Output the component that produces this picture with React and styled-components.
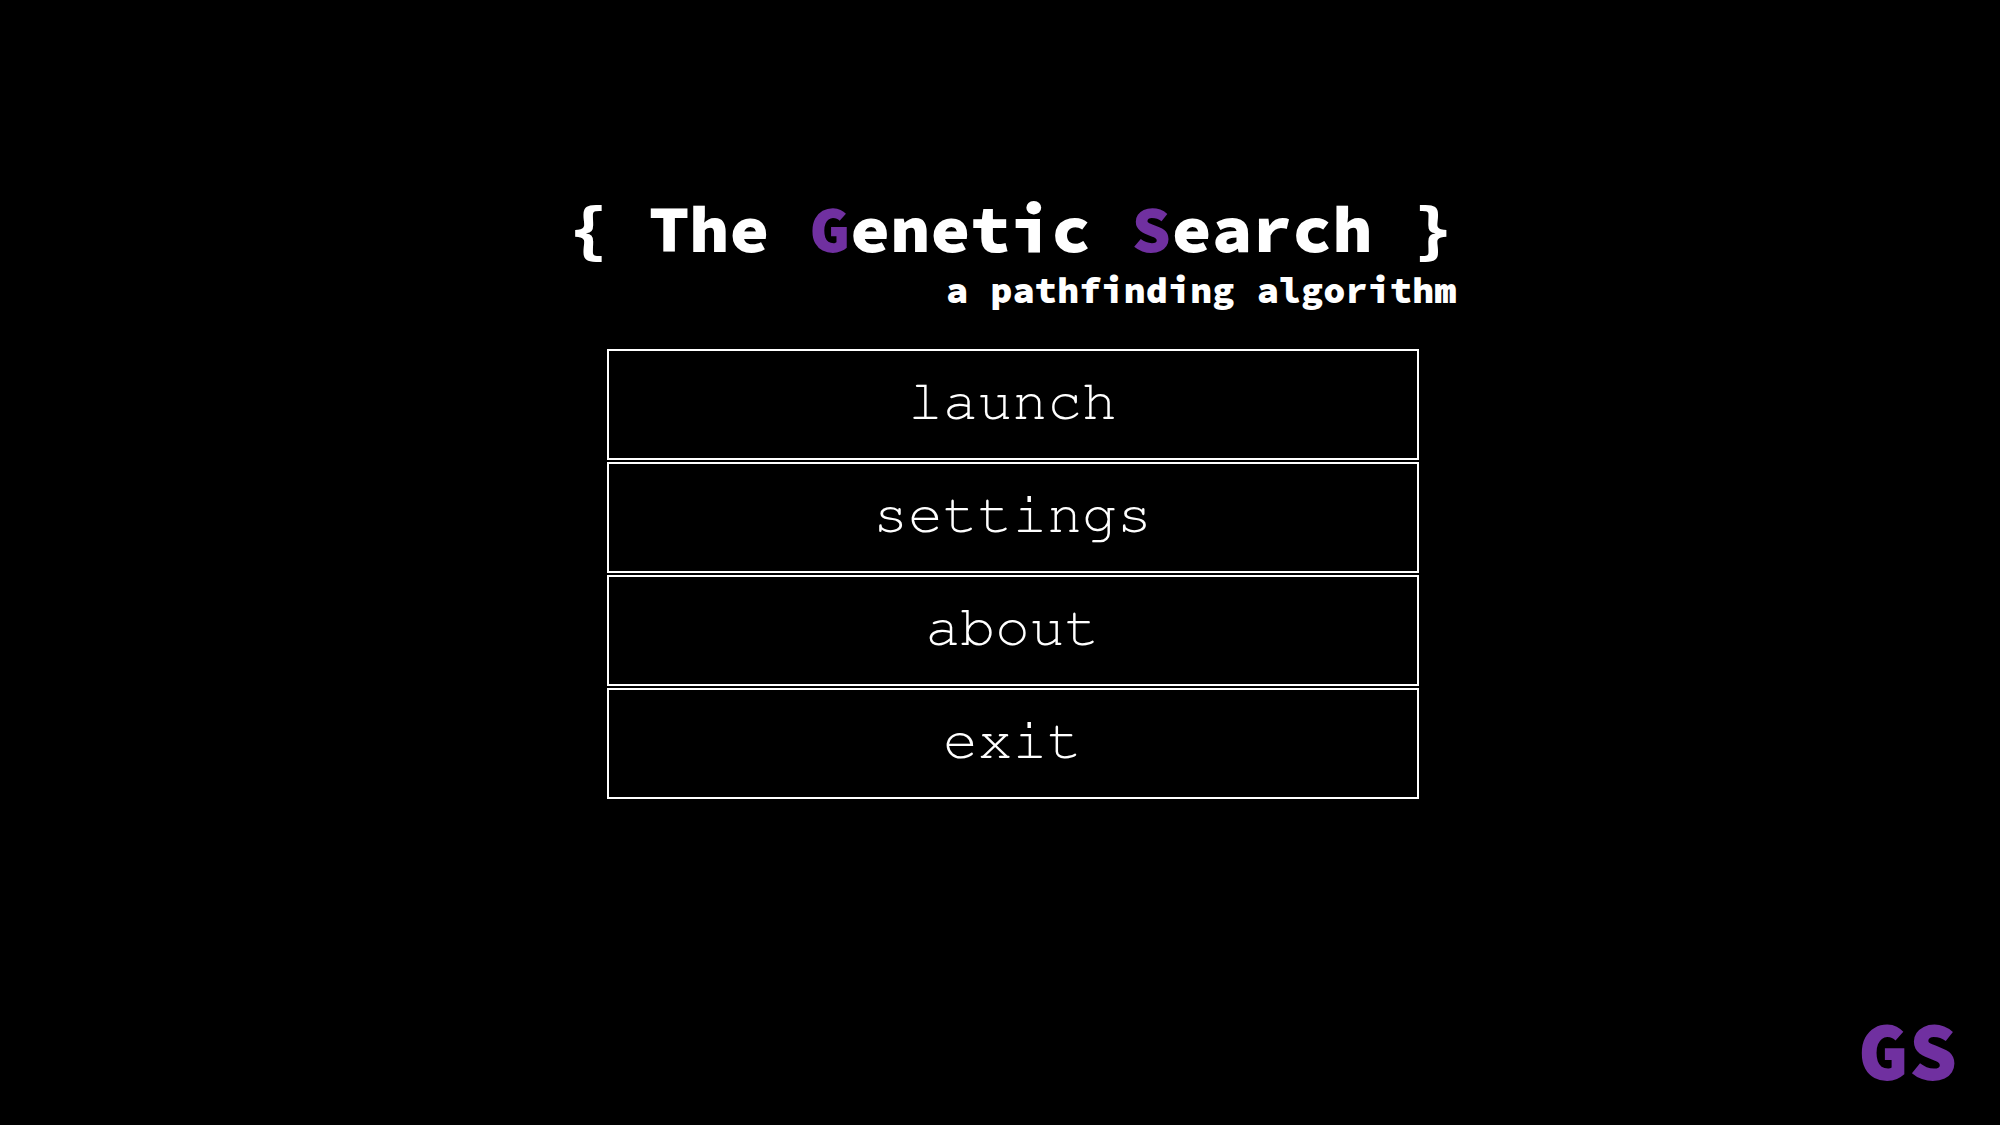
import React from "react";
import styled, { createGlobalStyle } from "styled-components";

const GlobalStyle = createGlobalStyle`
  *, *::before, *::after { box-sizing: border-box; }
  body { margin: 0; background: #000; color: #fff; }
`;

const displayFont = `"Source Code Pro", "Noto Sans Mono CJK SC", "DejaVu Sans Mono", monospace`;
const menuFont = `"FreeMono", "Nimbus Mono PS", "Courier New", "Liberation Mono", monospace`;

const Page = styled.div`
  display: flex;
  flex-direction: column;
  justify-content: space-between;
  min-height: 100vh;
  background: #000;
`;

const Main = styled.main`
  display: flex;
  flex-direction: column;
  align-items: center;
  gap: 34px;
  padding: 190px 0 0 25px;
`;

const Header = styled.header`
  display: flex;
  flex-direction: column;
  width: 888px;
  max-width: 100%;
  font-family: ${displayFont};
  font-weight: 900;
`;

const Title = styled.h1`
  margin: 0;
  font-size: 67px;
  line-height: 76px;
  font-weight: inherit;
  white-space: nowrap;
`;

const Initial = styled.span`
  color: #7030a0;
`;

const Subtitle = styled.p`
  margin: 0;
  font-size: 37px;
  line-height: 49px;
  text-align: right;
`;

const Menu = styled.nav`
  display: flex;
  flex-direction: column;
  gap: 2px;
  width: 812px;
  max-width: 100%;
`;

const MenuButton = styled.button`
  padding: 18px 20px 22px;
  border: 2px solid #fff;
  border-radius: 0;
  background: #000;
  color: #fff;
  font-family: ${menuFont};
  font-size: 58px;
  line-height: 67px;
  cursor: pointer;

  &:hover { background: #1a1a1a; }
`;

const Footer = styled.footer`
  display: flex;
  justify-content: flex-end;
  padding: 0 42px 26px;
`;

const Logo = styled.span`
  color: #7030a0;
  font-family: ${displayFont};
  font-size: 83px;
  line-height: 96px;
  font-weight: 900;
`;

const items = ["launch", "settings", "about", "exit"];

export default function App() {
  return (
    <>
      <GlobalStyle />
      <Page>
        <Main>
          <Header>
            <Title>
              {"{ The "}
              <Initial>G</Initial>enetic <Initial>S</Initial>earch {"}"}
            </Title>
            <Subtitle>a pathfinding algorithm</Subtitle>
          </Header>
          <Menu aria-label="Main menu">
            {items.map((item) => (
              <MenuButton key={item} type="button">{item}</MenuButton>
            ))}
          </Menu>
        </Main>
        <Footer>
          <Logo>GS</Logo>
        </Footer>
      </Page>
    </>
  );
}
